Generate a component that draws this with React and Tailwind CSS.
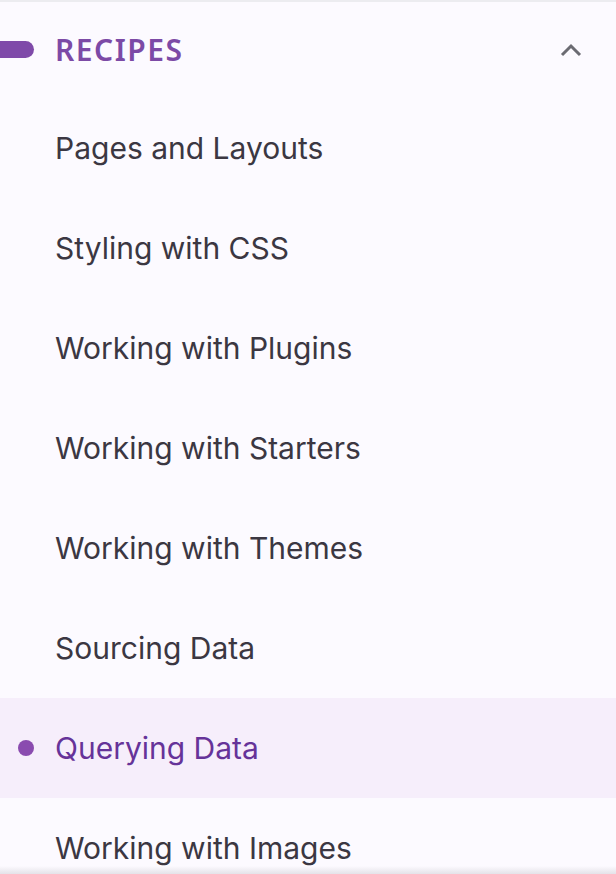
import React from 'react';

const items = [
  'Pages and Layouts',
  'Styling with CSS',
  'Working with Plugins',
  'Working with Starters',
  'Working with Themes',
  'Sourcing Data',
  'Querying Data',
  'Working with Images',
];

export default function App() {
  const active = 'Querying Data';

  return (
    <div className="relative w-[616px] h-[874px] overflow-hidden bg-[#fcfaff] border-t-2 border-[#ececf0]" style={{ fontFamily: 'Inter, "Noto Sans", sans-serif' }}>
      {/* Section header */}
      <div className="flex items-center h-[96px] pr-[34px]">
        <span className="w-[34px] h-[17px] bg-[#7f4aa9] rounded-r-full -mt-[2px]" />
        <span
          className="ml-[21px] text-[30px] font-semibold tracking-[0.05em] text-[#7c4aa6] leading-none"
          style={{ fontFamily: '"Noto Sans", sans-serif' }}
        >
          RECIPES
        </span>
        <svg className="ml-auto" width="22" height="14" viewBox="0 0 22 14" fill="none">
          <path d="M2 12 L11 3 L20 12" stroke="#6b6b72" strokeWidth="3" />
        </svg>
      </div>

      {/* Items */}
      <ul>
        {items.map((item) => {
          const isActive = item === active;
          return (
            <li
              key={item}
              className={`relative flex items-center h-[100px] pl-[55px] text-[30px] ${isActive ? 'bg-[#f6eefb] text-[#663399]' : 'text-[#3b3742]'}`}
            >
              {isActive && (
                <span className="absolute left-[18px] top-1/2 -translate-y-1/2 w-[16px] h-[16px] rounded-full bg-[#8a4baf]" />
              )}
              {item}
            </li>
          );
        })}
      </ul>

      <div className="absolute bottom-0 left-0 right-0 h-[8px] bg-gradient-to-b from-transparent to-[#e4e2e8]" />
    </div>
  );
}
